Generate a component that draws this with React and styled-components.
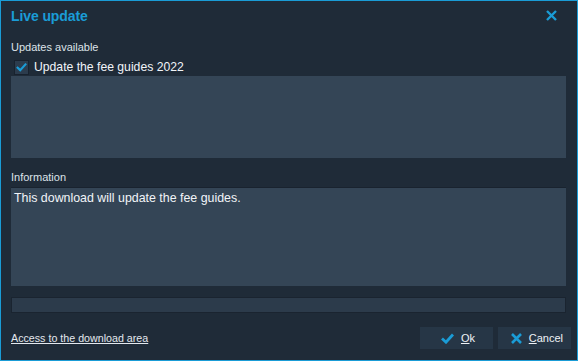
import React from 'react';
import styled, {createGlobalStyle} from 'styled-components';

const GlobalStyle = createGlobalStyle`
  html, body {
    margin: 0;
    padding: 0;
    background: #1f2b38;
  }
  * {
    box-sizing: border-box;
  }
`;

const BLUE = '#1a9cd6';

const Window = styled.div`
  width: 578px;
  height: 361px;
  border: 1px solid ${BLUE};
  background: #1f2b38;
  display: flex;
  flex-direction: column;
  font-family: "Liberation Sans", Arial, sans-serif;
  color: #e3e8ee;
`;

const TitleBar = styled.div`
  height: 29px;
  display: flex;
  align-items: center;
  justify-content: space-between;
  padding: 0 20px 0 10px;
`;

const Title = styled.div`
  font-size: 14px;
  font-weight: bold;
  color: ${BLUE};
  letter-spacing: -0.1px;
`;

const CloseButton = styled.button`
  border: 0;
  background: none;
  padding: 0;
  width: 11px;
  height: 11px;
  display: flex;
  cursor: pointer;
`;

const Body = styled.div`
  display: flex;
  flex-direction: column;
  padding: 0 11px 0 10px;
`;

const Label = styled.div`
  font-size: 11px;
  line-height: 14px;
  height: 14px;
  margin-top: ${p => p.$top}px;
  margin-bottom: ${p => p.$bottom}px;
  color: #dde3e9;
`;

const ListBox = styled.div`
  height: 100px;
  background: #344556;
  display: flex;
  flex-direction: column;
`;

const ListRow = styled.label`
  height: 18px;
  display: flex;
  align-items: center;
  gap: 5px;
  padding-left: 3px;
  background: #1f2b38;
  font-size: 12.2px;
  color: #f1f4f8;
`;

const Check = styled.span`
  width: 15px;
  height: 15px;
  background: #2c3c4d;
  border: 1px solid #18222e;
  display: flex;
  align-items: center;
  justify-content: center;
`;

const InfoBox = styled.div`
  height: 99px;
  background: #344556;
  border-top: 1px solid #19232f;
  padding: 3px 3px;
  font-size: 12.4px;
  line-height: 15px;
  color: #f1f4f8;
`;

const Progress = styled.div`
  height: 16px;
  margin-top: 11px;
  background: #2c3b4b;
  border: 1px solid #1a2430;
`;

const Footer = styled.div`
  display: flex;
  align-items: center;
  justify-content: space-between;
  padding: 0 6px 0 10px;
  margin-top: 14px;
`;

const Link = styled.a`
  font-size: 10.7px;
  color: #e3e8ee;
  text-decoration: underline;
  cursor: pointer;
`;

const Buttons = styled.div`
  display: flex;
  gap: 5px;
`;

const Button = styled.button`
  width: 73px;
  height: 22px;
  border: 0;
  background: #263646;
  color: #eef2f6;
  font-family: "Liberation Sans", Arial, sans-serif;
  font-size: 11px;
  display: flex;
  align-items: center;
  justify-content: flex-end;
  gap: 7px;
  padding: 0 ${p => p.$right}px 0 0;
  cursor: pointer;
`;

const CrossIcon = ({size = 11, width = 2.6}) => (
  <svg width={size} height={size} viewBox="0 0 11 11">
    <path d="M1 1 L10 10 M10 1 L1 10" stroke={BLUE} strokeWidth={width} fill="none" />
  </svg>
);

const CheckIcon = ({w = 13, h = 11, width = 2.8}) => (
  <svg width={w} height={h} viewBox="0 0 13 11">
    <path d="M1 5.5 L5 9.2 L12 1.5" stroke={BLUE} strokeWidth={width} fill="none" />
  </svg>
);

export default function App() {
  return (
    <>
      <GlobalStyle />
      <Window>
        <TitleBar>
          <Title>Live update</Title>
          <CloseButton aria-label="Close"><CrossIcon size={11} width={2.4} /></CloseButton>
        </TitleBar>

        <Body>
          <Label $top={10} $bottom={4}>Updates available</Label>
          <ListBox>
            <ListRow>
              <Check><CheckIcon w={11} h={10} width={2.6} /></Check>
              Update the fee guides 2022
            </ListRow>
          </ListBox>

          <Label $top={12} $bottom={3}>Information</Label>
          <InfoBox>This download will update the fee guides.</InfoBox>

          <Progress />
        </Body>

        <Footer>
          <Link>Access to the download area</Link>
          <Buttons>
            <Button $right={18}><CheckIcon /><span><u>O</u>k</span></Button>
            <Button $right={8}><CrossIcon /><span><u>C</u>ancel</span></Button>
          </Buttons>
        </Footer>
      </Window>
    </>
  );
}
